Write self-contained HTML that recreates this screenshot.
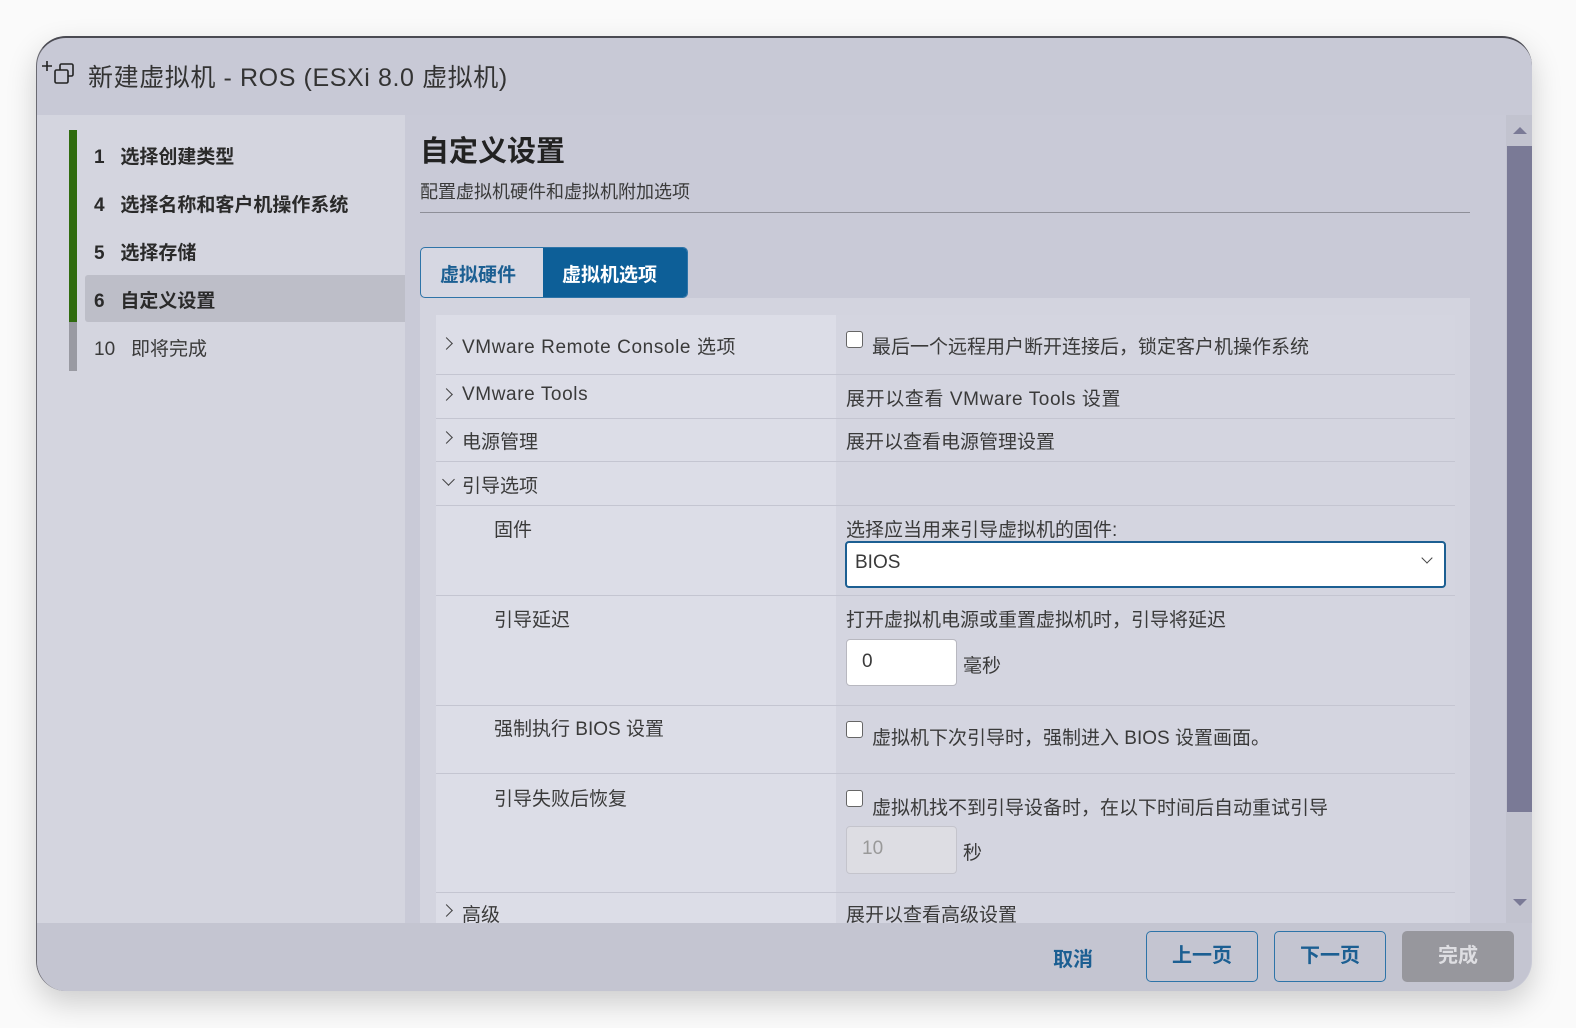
<!DOCTYPE html>
<html style="overflow:hidden;width:1576px;height:1028px"><head><meta charset="utf-8"><style>
*{margin:0;padding:0;box-sizing:border-box}
html,body{overflow:hidden}
body{width:1576px;height:1028px;background:#fafafa;font-family:"Liberation Sans","Noto Sans CJK SC",sans-serif;color:#333;position:relative}
.win{position:absolute;left:36px;top:36px;width:1496px;height:955px;border-radius:30px;background:#c8c9d6;overflow:hidden;box-shadow:0 12px 30px rgba(0,0,0,.18);border-top:2px solid #4a4a52;border-left:1px solid #6a6a72}
.a{position:absolute}
.t{font-size:19px;color:#3a3a3a;white-space:nowrap}
.cb{position:absolute;width:17px;height:17px;border:1.5px solid #666;border-radius:3px;background:#fff}
.row{position:absolute;left:436px;width:1019px;border-bottom:1px solid #c4c5d1}
.lc{position:absolute;left:0;top:0;width:400px;height:100%;background:#dcdde7}
.rc{position:absolute;left:400px;top:0;right:0;height:100%;background:#d4d5e0}
.ch{position:absolute;width:9px;height:9px;border-right:1.5px solid #444;border-bottom:1.5px solid #444}
.btn{position:absolute;top:931px;height:51px;border:1.5px solid #2e74a8;border-radius:5px;color:#1c5f92;font-weight:bold;font-size:20px;text-align:center;line-height:48px}
.w{letter-spacing:0.6px}
</style></head><body>
<div class="win"></div>
<svg class="a" style="left:40px;top:58px" width="38" height="30" viewBox="0 0 38 30"><path d="M2 8h10M7 3v10" stroke="#222" stroke-width="1.6" fill="none"/><rect x="20" y="6" width="13" height="12" rx="1.5" stroke="#222" stroke-width="1.6" fill="none"/><rect x="15" y="12" width="13" height="13" rx="1.5" stroke="#222" stroke-width="1.6" fill="#c8c9d6"/></svg>
<div class="a t w" style="left:88px;top:58px;font-size:25px;color:#333">新建虚拟机 - ROS (ESXi 8.0 虚拟机)</div>
<div class="a" style="left:37px;top:115px;width:368px;height:808px;background:#d4d5df"></div>
<div class="a" style="left:69px;top:130px;width:8px;height:192px;background:#2f6b0e"></div>
<div class="a" style="left:69px;top:322px;width:8px;height:49px;background:#999aa2"></div>
<div class="a" style="left:85px;top:275px;width:320px;height:47px;background:#bdbec8;border-radius:3px 0 0 3px"></div>
<div class="a t" style="left:94px;top:142px;font-weight:bold;color:#2a2a2a">1&nbsp;&nbsp;&nbsp;选择创建类型</div>
<div class="a t" style="left:94px;top:190px;font-weight:bold;color:#2a2a2a">4&nbsp;&nbsp;&nbsp;选择名称和客户机操作系统</div>
<div class="a t" style="left:94px;top:238px;font-weight:bold;color:#2a2a2a">5&nbsp;&nbsp;&nbsp;选择存储</div>
<div class="a t" style="left:94px;top:286px;font-weight:bold;color:#2a2a2a">6&nbsp;&nbsp;&nbsp;自定义设置</div>
<div class="a t" style="left:94px;top:334px">10&nbsp;&nbsp;&nbsp;即将完成</div>
<div class="a" style="left:405px;top:115px;width:1101px;height:808px;background:#c9cad7"></div>
<div class="a t" style="left:420px;top:128px;font-size:29px;font-weight:bold;color:#222">自定义设置</div>
<div class="a t" style="left:420px;top:178px;font-size:18px">配置虚拟机硬件和虚拟机附加选项</div>
<div class="a" style="left:420px;top:212px;width:1050px;height:1px;background:#8e8f98"></div>
<div class="a" style="left:420px;top:247px;width:268px;height:51px;border:1.5px solid #2e74a8;border-radius:5px;background:#d6d7e2;overflow:hidden">
 <div class="a" style="left:122px;top:0;width:146px;height:100%;background:#0d5f98"></div>
 <div class="a t" style="left:19px;top:12px;font-weight:bold;color:#1c5f92">虚拟硬件</div>
 <div class="a t" style="left:141px;top:12px;font-weight:bold;color:#fff">虚拟机选项</div>
</div>
<div class="a" style="left:420px;top:298px;width:1050px;height:625px;background:#d3d4df"></div>
<div class="row" style="top:315px;height:60px"><div class="lc"></div><div class="rc"></div></div>
<div class="row" style="top:375px;height:44px"><div class="lc"></div><div class="rc"></div></div>
<div class="row" style="top:419px;height:43px"><div class="lc"></div><div class="rc"></div></div>
<div class="row" style="top:462px;height:44px"><div class="lc"></div><div class="rc"></div></div>
<div class="row" style="top:506px;height:90px"><div class="lc"></div><div class="rc"></div></div>
<div class="row" style="top:596px;height:110px"><div class="lc"></div><div class="rc"></div></div>
<div class="row" style="top:706px;height:68px"><div class="lc"></div><div class="rc"></div></div>
<div class="row" style="top:774px;height:119px"><div class="lc"></div><div class="rc"></div></div>
<div class="row" style="top:893px;height:30px;border:0"><div class="lc"></div><div class="rc"></div></div>
<div class="ch" style="left:442px;top:339px;transform:rotate(-45deg)"></div>
<div class="ch" style="left:442px;top:390px;transform:rotate(-45deg)"></div>
<div class="ch" style="left:442px;top:433px;transform:rotate(-45deg)"></div>
<div class="ch" style="left:444px;top:475px;transform:rotate(45deg)"></div>
<div class="ch" style="left:442px;top:906px;transform:rotate(-45deg)"></div>
<div class="a t w" style="left:462px;top:332px">VMware Remote Console 选项</div>
<div class="a t w" style="left:462px;top:384px">VMware Tools</div>
<div class="a t" style="left:462px;top:427px">电源管理</div>
<div class="a t" style="left:462px;top:471px">引导选项</div>
<div class="a t" style="left:494px;top:515px">固件</div>
<div class="a t" style="left:494px;top:605px">引导延迟</div>
<div class="a t" style="left:494px;top:714px">强制执行 BIOS 设置</div>
<div class="a t" style="left:494px;top:784px">引导失败后恢复</div>
<div class="a t" style="left:462px;top:900px;height:23px;overflow:hidden">高级</div>
<div class="cb" style="left:846px;top:331px"></div>
<div class="a t" style="left:872px;top:332px">最后一个远程用户断开连接后，锁定客户机操作系统</div>
<div class="a t w" style="left:846px;top:384px">展开以查看 VMware Tools 设置</div>
<div class="a t" style="left:846px;top:427px">展开以查看电源管理设置</div>
<div class="a t" style="left:846px;top:515px">选择应当用来引导虚拟机的固件:</div>
<div class="a" style="left:845px;top:541px;width:601px;height:47px;background:#fff;border:2px solid #1c5f92;border-radius:4px"></div>
<div class="a t" style="left:855px;top:552px">BIOS</div>
<div class="ch" style="left:1423px;top:554px;width:8px;height:8px;transform:rotate(45deg);border-width:1.3px"></div>
<div class="a t" style="left:846px;top:605px">打开虚拟机电源或重置虚拟机时，引导将延迟</div>
<div class="a" style="left:846px;top:639px;width:111px;height:47px;background:#fff;border:1px solid #b8b8c0;border-radius:4px"></div>
<div class="a t" style="left:862px;top:651px">0</div>
<div class="a t" style="left:963px;top:651px">毫秒</div>
<div class="cb" style="left:846px;top:721px"></div>
<div class="a t" style="left:872px;top:723px">虚拟机下次引导时，强制进入 BIOS 设置画面。</div>
<div class="cb" style="left:846px;top:790px"></div>
<div class="a t" style="left:872px;top:793px">虚拟机找不到引导设备时，在以下时间后自动重试引导</div>
<div class="a" style="left:846px;top:826px;width:111px;height:48px;background:#dddde3;border:1px solid #c4c4cc;border-radius:4px"></div>
<div class="a t" style="left:862px;top:838px;color:#999">10</div>
<div class="a t" style="left:963px;top:838px">秒</div>
<div class="a t" style="left:846px;top:900px;height:23px;overflow:hidden">展开以查看高级设置</div>
<div class="a" style="left:1506px;top:115px;width:26px;height:808px;background:#c2c3cf"></div>
<div class="a" style="left:1507px;top:146px;width:25px;height:666px;background:#7a7a96"></div>
<div class="a" style="left:1513px;top:127px;border-left:7px solid transparent;border-right:7px solid transparent;border-bottom:7px solid #7a7a96"></div>
<div class="a" style="left:1513px;top:899px;border-left:7px solid transparent;border-right:7px solid transparent;border-top:7px solid #7a7a96"></div>
<div class="a" style="left:37px;top:923px;width:1494px;height:68px;background:#c4c5d1;border-radius:0 0 30px 30px"></div>
<div class="a t" style="left:1053px;top:943px;font-size:20px;font-weight:bold;color:#1c5f92">取消</div>
<div class="btn" style="left:1146px;width:112px">上一页</div>
<div class="btn" style="left:1274px;width:112px">下一页</div>
<div class="btn" style="left:1402px;width:112px;background:#97979d;border-color:#97979d;color:#dedee2">完成</div>
</body></html>
